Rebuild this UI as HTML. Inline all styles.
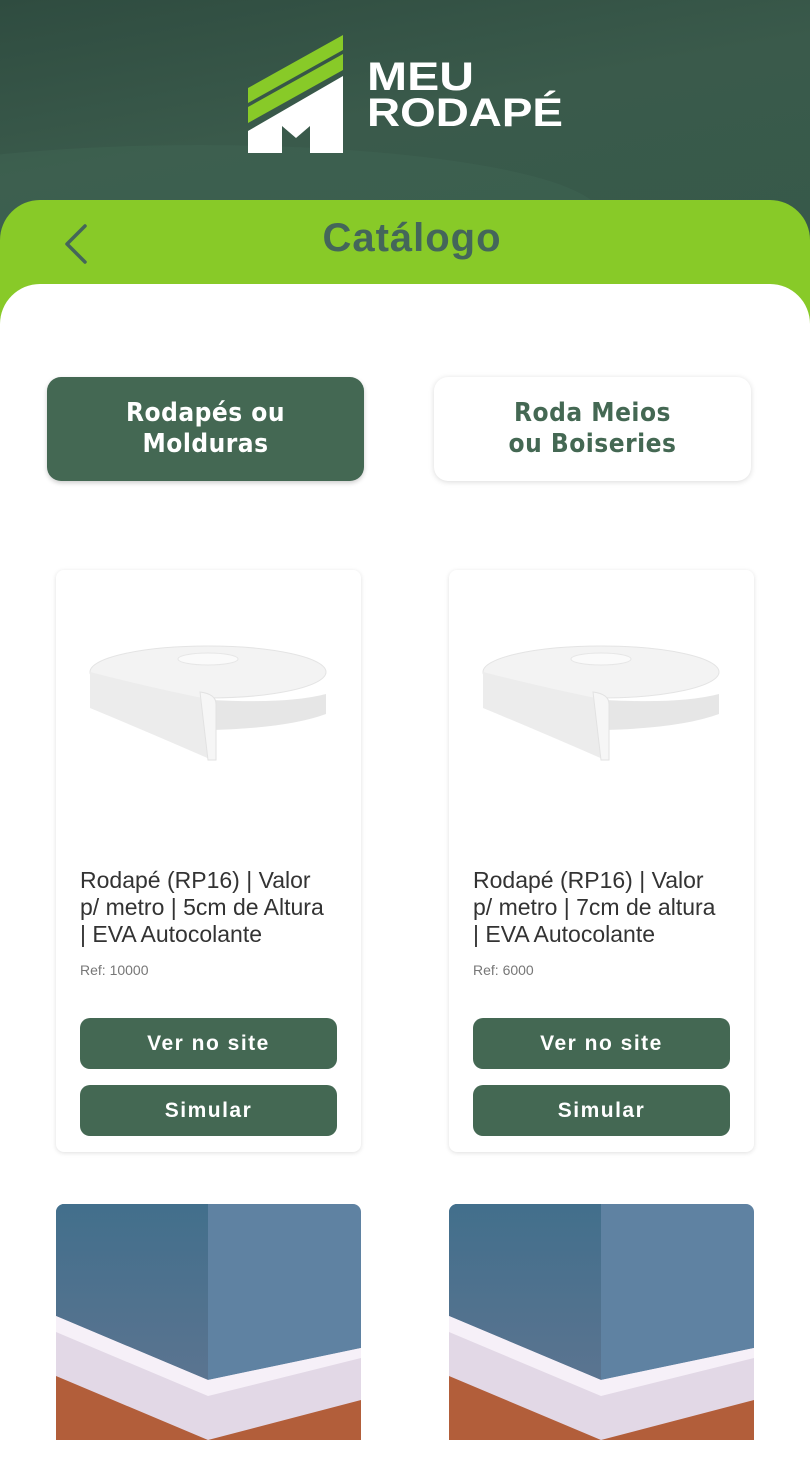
<!DOCTYPE html>
<html><head><meta charset="utf-8"><style>
*{margin:0;padding:0;box-sizing:border-box}
body{width:810px;height:1440px;overflow:hidden;background:#fff;font-family:"Liberation Sans",sans-serif;position:relative}
.hdr{position:absolute;left:0;top:0;width:810px;height:260px;background:linear-gradient(170deg,#2f4c40 0%,#3a5a4b 45%,#36594a 100%);overflow:hidden}
.hdr:after{content:"";position:absolute;left:-200px;top:145px;width:800px;height:140px;border-radius:50%;background:rgba(80,120,100,.18)}
.band{position:absolute;left:0;top:200px;width:810px;height:200px;background:#88ca28;border-radius:40px 40px 0 0}
.main{position:absolute;left:0;top:284px;width:810px;height:1200px;background:#fff;border-radius:40px 40px 0 0}
.title{position:absolute;left:7px;width:810px;top:216px;text-align:center;font-weight:bold;font-size:40px;color:#44665a;letter-spacing:1px}
.tab{position:absolute;top:377px;width:317px;height:104px;border-radius:14px;display:flex;align-items:center;justify-content:center;text-align:center;font-weight:bold;font-size:26px;line-height:31px;font-family:"Liberation Sans Narrow","DejaVu Sans Condensed",sans-serif;letter-spacing:.5px}
.card{position:absolute;width:305px;background:#fff;border-radius:8px;box-shadow:0 1px 5px rgba(0,0,0,.13)}
.name{position:absolute;left:24px;top:297px;width:270px;font-size:23px;line-height:27px;color:#333;white-space:nowrap}
.ref{position:absolute;left:24px;top:392px;font-size:14px;color:#777}
.btn{position:absolute;left:24px;width:257px;height:51px;background:#446853;border-radius:10px;color:#fff;font-weight:bold;font-size:21px;letter-spacing:1.5px;display:flex;align-items:center;justify-content:center}
</style></head><body>
<div class="hdr"></div>
<svg style="position:absolute;left:246px;top:34px" width="320" height="122" viewBox="246 34 320 122">
<polygon points="248,88 343,35 343,50 248,103" fill="#88ca28"/>
<polygon points="248,107 343,54 343,70 248,123" fill="#88ca28"/>
<polygon points="248,131 343,76 343,153 310,153 310,126 296,138 282,126 282,153 248,153" fill="#fff"/>
<text x="367" y="90" font-family="Liberation Sans" font-weight="bold" font-size="40" fill="#fff" textLength="107" lengthAdjust="spacingAndGlyphs">MEU</text>
<text x="367" y="126" font-family="Liberation Sans" font-weight="bold" font-size="40" fill="#fff" textLength="196" lengthAdjust="spacingAndGlyphs">RODAPÉ</text>
</svg>
<div class="band"></div>
<svg style="position:absolute;left:62px;top:224px" width="30" height="40"><polyline points="23,2 5,20 23,38" fill="none" stroke="#44665a" stroke-width="3.5" stroke-linecap="round" stroke-linejoin="round"/></svg>
<div class="title">Catálogo</div>
<div class="main"></div>
<div class="tab" style="left:47px;background:#446853;color:#fff;box-shadow:0 2px 5px rgba(0,0,0,.2)">Rodapés ou<br>Molduras</div>
<div class="tab" style="left:434px;background:#fff;color:#446853;box-shadow:0 1px 6px rgba(0,0,0,.15)">Roda Meios<br>ou Boiseries</div>

<div class="card" style="left:56px;top:570px;height:582px">
<svg style="position:absolute;left:32px;top:72px" width="245" height="125" viewBox="0 0 245 125">
<ellipse cx="120" cy="30" rx="118" ry="26" fill="#f3f3f3" stroke="#e4e4e4"/>
<ellipse cx="120" cy="17" rx="30" ry="6" fill="#fafafa" stroke="#e6e6e6"/>
<path d="M2 30 L2 66 Q60 90 124 118 L124 58 Q60 45 2 30Z" fill="#ececec"/>
<path d="M124 58 Q200 62 238 52 L238 72 Q200 86 124 88Z" fill="#e6e6e6"/>
<path d="M112 50 Q128 52 128 62 L128 118 L120 118Z" fill="#f6f6f6" stroke="#e2e2e2"/>
</svg>
<div class="name">Rodapé (RP16) | Valor<br>p/ metro | 5cm de Altura<br>| EVA Autocolante</div>
<div class="ref">Ref: 10000</div>
<div class="btn" style="top:448px">Ver no site</div>
<div class="btn" style="top:515px">Simular</div>
</div>

<div class="card" style="left:449px;top:570px;height:582px">
<svg style="position:absolute;left:32px;top:72px" width="245" height="125" viewBox="0 0 245 125">
<ellipse cx="120" cy="30" rx="118" ry="26" fill="#f3f3f3" stroke="#e4e4e4"/>
<ellipse cx="120" cy="17" rx="30" ry="6" fill="#fafafa" stroke="#e6e6e6"/>
<path d="M2 30 L2 66 Q60 90 124 118 L124 58 Q60 45 2 30Z" fill="#ececec"/>
<path d="M124 58 Q200 62 238 52 L238 72 Q200 86 124 88Z" fill="#e6e6e6"/>
<path d="M112 50 Q128 52 128 62 L128 118 L120 118Z" fill="#f6f6f6" stroke="#e2e2e2"/>
</svg>
<div class="name">Rodapé (RP16) | Valor<br>p/ metro | 7cm de altura<br>| EVA Autocolante</div>
<div class="ref">Ref: 6000</div>
<div class="btn" style="top:448px">Ver no site</div>
<div class="btn" style="top:515px">Simular</div>
</div>

<svg style="position:absolute;left:56px;top:1204px;border-radius:8px 8px 0 0" width="305" height="236" viewBox="0 0 305 236">
<defs><linearGradient id="w1" x1="0" y1="0" x2="0" y2="1"><stop offset="0" stop-color="#426f8c"/><stop offset="1" stop-color="#5b7490"/></linearGradient></defs>
<rect width="305" height="236" fill="#5f82a2"/>
<polygon points="0,0 152,0 152,178 0,112" fill="url(#w1)"/>
<polygon points="0,150 152,215 305,180 305,236 0,236" fill="#b25e3a"/>
<polygon points="0,112 152,176 305,144 305,196 152,236 0,172" fill="#e2d8e6"/>
<polygon points="0,112 152,176 305,144 305,154 152,192 0,128" fill="#f6f0f8"/>
</svg>
<svg style="position:absolute;left:449px;top:1204px;border-radius:8px 8px 0 0" width="305" height="236" viewBox="0 0 305 236">
<defs><linearGradient id="w2" x1="0" y1="0" x2="0" y2="1"><stop offset="0" stop-color="#426f8c"/><stop offset="1" stop-color="#5b7490"/></linearGradient></defs>
<rect width="305" height="236" fill="#5f82a2"/>
<polygon points="0,0 152,0 152,178 0,112" fill="url(#w2)"/>
<polygon points="0,150 152,215 305,180 305,236 0,236" fill="#b25e3a"/>
<polygon points="0,112 152,176 305,144 305,196 152,236 0,172" fill="#e2d8e6"/>
<polygon points="0,112 152,176 305,144 305,154 152,192 0,128" fill="#f6f0f8"/>
</svg>
</body></html>
